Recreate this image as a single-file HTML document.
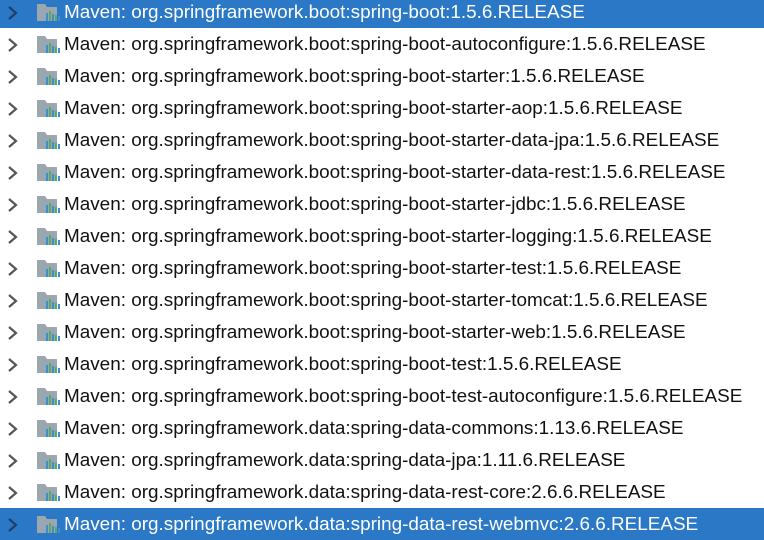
<!DOCTYPE html>
<html><head><style>
body{margin:0;width:764px;height:540px;overflow:hidden;background:#fff;font-family:"Liberation Sans",sans-serif;}
.r{position:absolute;left:0;width:764px;height:32px;}
.s{background:#2a78c6;color:#fff;}
.r .a{position:absolute;left:5px;top:9px;}
.r .i{position:absolute;left:37px;top:7px;}
.r .t{position:absolute;left:64px;top:6px;font-size:18.9px;white-space:nowrap;color:#111;}
.s .t{color:#fff;}
</style></head><body>
<div id="c"></div>
<script>
var n=["org.springframework.boot:spring-boot:1.5.6.RELEASE","org.springframework.boot:spring-boot-autoconfigure:1.5.6.RELEASE","org.springframework.boot:spring-boot-starter:1.5.6.RELEASE","org.springframework.boot:spring-boot-starter-aop:1.5.6.RELEASE","org.springframework.boot:spring-boot-starter-data-jpa:1.5.6.RELEASE","org.springframework.boot:spring-boot-starter-data-rest:1.5.6.RELEASE","org.springframework.boot:spring-boot-starter-jdbc:1.5.6.RELEASE","org.springframework.boot:spring-boot-starter-logging:1.5.6.RELEASE","org.springframework.boot:spring-boot-starter-test:1.5.6.RELEASE","org.springframework.boot:spring-boot-starter-tomcat:1.5.6.RELEASE","org.springframework.boot:spring-boot-starter-web:1.5.6.RELEASE","org.springframework.boot:spring-boot-test:1.5.6.RELEASE","org.springframework.boot:spring-boot-test-autoconfigure:1.5.6.RELEASE","org.springframework.data:spring-data-commons:1.13.6.RELEASE","org.springframework.data:spring-data-jpa:1.11.6.RELEASE","org.springframework.data:spring-data-rest-core:2.6.6.RELEASE","org.springframework.data:spring-data-rest-webmvc:2.6.6.RELEASE"];
var h="";
n.forEach(function(x,i){
var s=(i==0||i==16);
var ac=s?"#1d3f66":"#555";
h+='<div class="r'+(s?' s':'')+'" style="top:'+(32*i-4)+'px">'+
'<svg class="a" width="14" height="16"><path d="M4 2 L11 8 L4 14" fill="none" stroke="'+ac+'" stroke-width="2.2"/></svg>'+
'<svg class="i" width="24" height="20"><path d="M0 1h8l2 3h10v14H0z" fill="#9aa7b0"/><rect x="9" y="10" width="2" height="8" fill="#3d8fc9"/><rect x="12" y="8" width="2" height="10" fill="#59a869"/><rect x="15" y="11" width="2" height="7" fill="#3d8fc9"/><rect x="18" y="12" width="2" height="6" fill="#59a869"/><rect x="21" y="13" width="2" height="5" fill="#3d8fc9"/></svg>'+
'<span class="t">Maven: '+x+'</span></div>';
});
document.getElementById("c").innerHTML=h;
</script>
</body></html>
